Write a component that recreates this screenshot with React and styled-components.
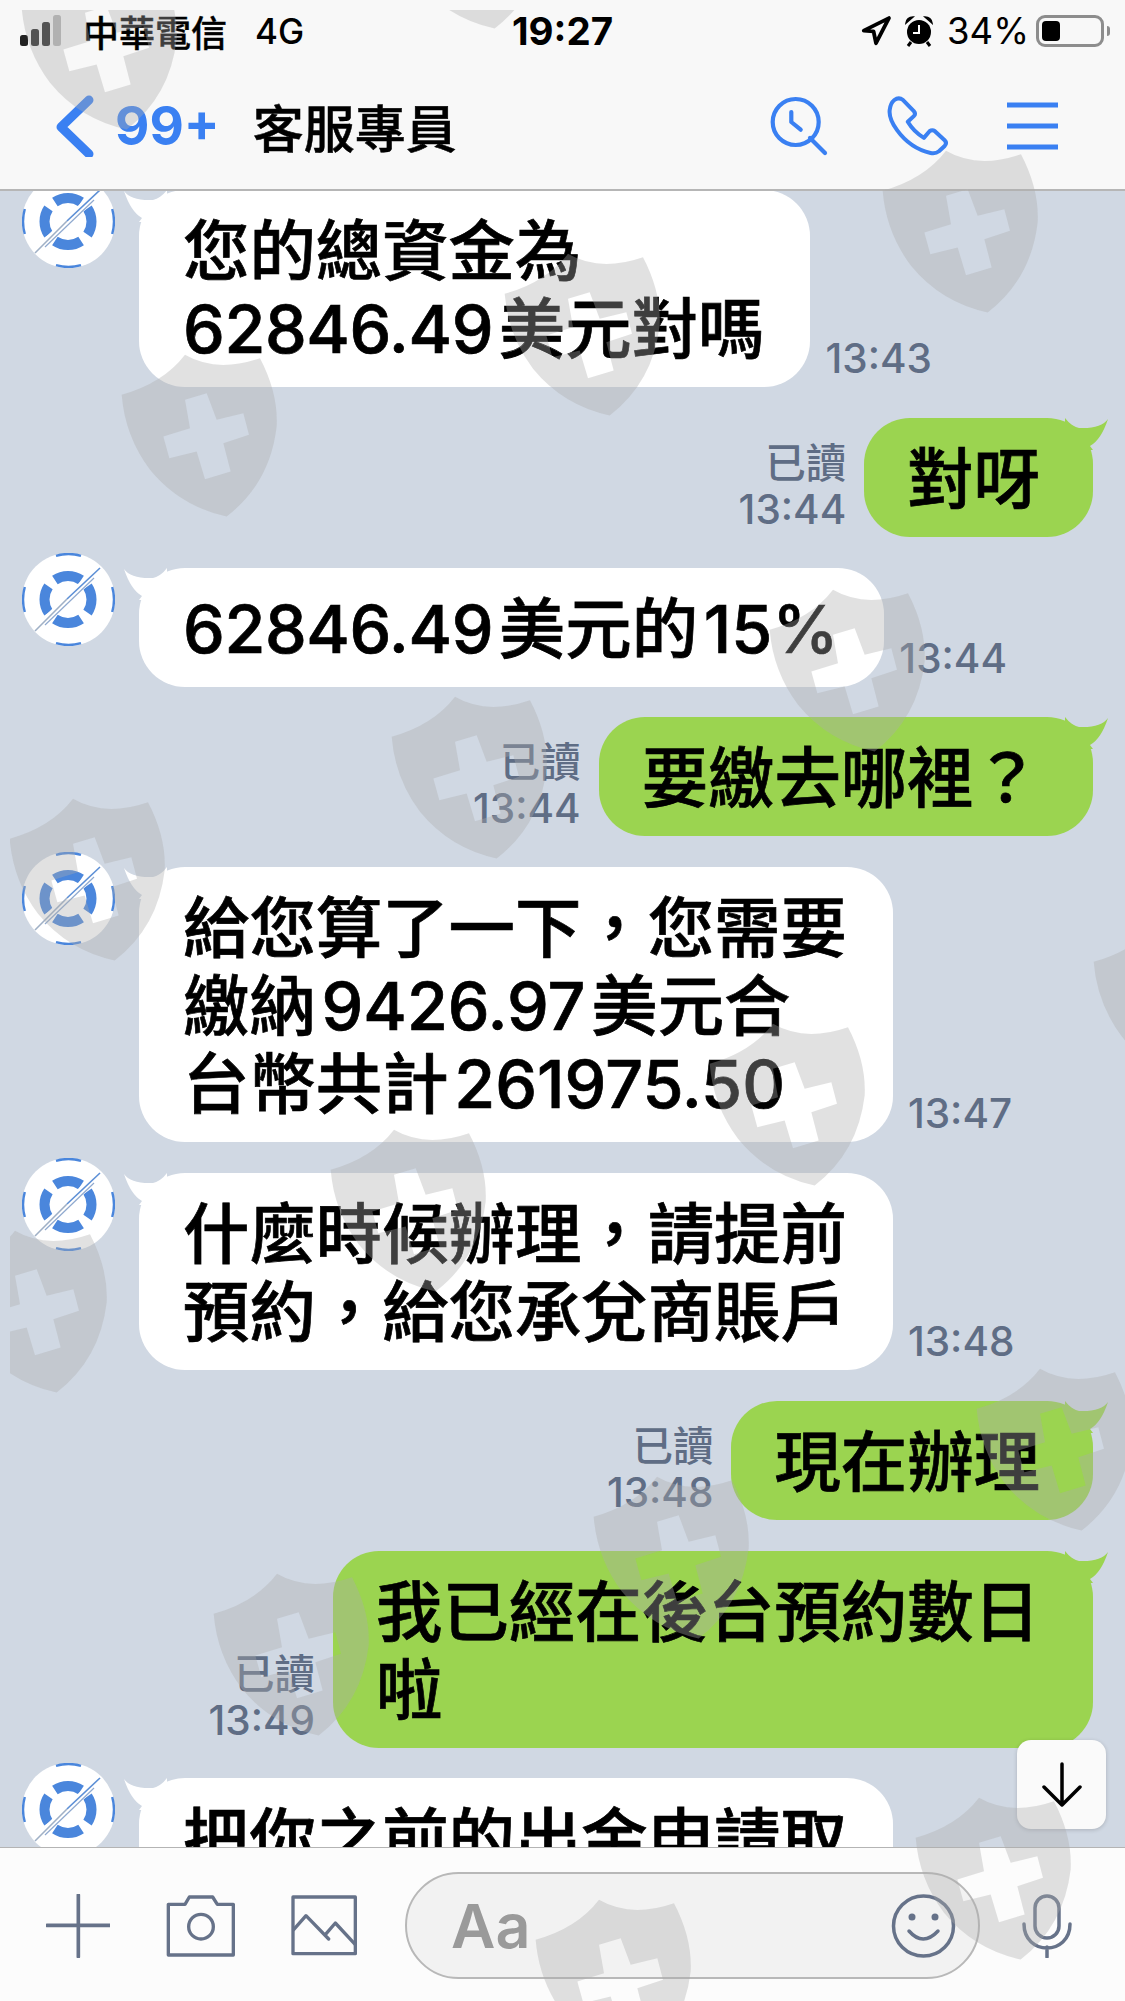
import React from 'react';
import styled, { createGlobalStyle } from 'styled-components';

const GlobalStyle = createGlobalStyle`
  html, body {
    margin: 0;
    padding: 0;
    background: #d0d8e3;
  }
  body {
    font-family: Inter, "Noto Sans CJK TC", sans-serif;
    color: #000;
  }
`;

const Page = styled.div`
  position: relative;
  width: 1125px;
  height: 2001px;
  display: flex;
  flex-direction: column;
  overflow: hidden;
  background: #d0d8e3;
`;

const Header = styled.header`
  height: 189px;
  flex: none;
  display: flex;
  flex-direction: column;
  background: #f8f8f8;
  border-bottom: 2px solid #b6b6b6;
`;

const StatusBar = styled.div`
  height: 62px;
  padding: 0 17px 0 20px;
  display: flex;
  align-items: center;
  justify-content: space-between;
`;

const StatusSide = styled.div`
  width: 400px;
  display: flex;
  align-items: center;
  gap: ${(p) => p.$gap || 0}px;
  justify-content: ${(p) => (p.$right ? 'flex-end' : 'flex-start')};
`;

const Carrier = styled.span`
  margin-left: 21px;
  font-size: 36px;
  font-weight: 500;
  -webkit-text-stroke: 0.4px #000;
`;

const Network = styled.span`
  margin-left: 28px;
  font-size: 35px;
  font-weight: 500;
`;

const Clock = styled.span`
  margin-left: -3px;
  font-size: 38.5px;
  font-weight: 700;
`;

const Percent = styled.span`
  font-size: 36.5px;
  font-weight: 400;
`;

const Battery = styled.div`
  position: relative;
  width: 68px;
  height: 32px;
  margin: 0 4px 0 -6px;
  padding: 3px;
  box-sizing: border-box;
  border: 3px solid #8d8d8d;
  border-radius: 9px;
  &::before {
    content: '';
    display: block;
    width: 18px;
    height: 100%;
    border-radius: 4px;
    background: #000;
  }
  &::after {
    content: '';
    position: absolute;
    right: -9px;
    top: 8px;
    width: 3px;
    height: 10px;
    background: #8d8d8d;
    border-radius: 0 3px 3px 0;
  }
`;

const NavBar = styled.nav`
  flex: 1;
  display: flex;
  align-items: center;
  padding: 0 67px 0 56px;
  color: #3a80f2;
`;

const Unread = styled.span`
  margin-left: 21px;
  font-size: 53px;
  font-weight: 700;
`;

const Title = styled.h1`
  margin: 0 0 0 33px;
  font-size: 51px;
  font-weight: 500;
  -webkit-text-stroke: 0.5px #000;
  color: #000;
  flex: 1;
`;

const NavIcons = styled.div`
  display: flex;
  align-items: center;
  gap: 58px;
`;

const Chat = styled.main`
  position: relative;
  flex: 1;
  min-height: 0;
  overflow: hidden;
`;

const MessageList = styled.div`
  margin-top: -1px;
  padding: 0 32px 0 22px;
  display: flex;
  flex-direction: column;
  gap: 30.8px;
`;

const Row = styled.div`
  display: flex;
  align-items: flex-end;
  justify-content: ${(p) => (p.$mine ? 'flex-end' : 'flex-start')};
  position: relative;
`;

const AvatarSlot = styled.div`
  align-self: flex-start;
  width: 93px;
  height: 93px;
  margin: -15px 24px 0 0;
  flex: none;
`;

const Bubble = styled.div`
  position: relative;
  box-sizing: border-box;
  padding: ${(p) => (p.$mine ? '22px 53px 19px 43px' : '22px 46px 19px 44px')};
  border-radius: 46px;
  font-size: 66.4px;
  line-height: 78px;
  font-weight: 500;
  -webkit-text-stroke: 0.7px #000;
  white-space: nowrap;
  background: ${(p) => (p.$mine ? '#9bd450' : '#fff')};
`;

const Amount = styled.span`
  letter-spacing: -0.4px;
`;

const Tail = styled.svg`
  position: absolute;
  top: 0;
  width: 44px;
  height: 32px;
  overflow: visible;
  ${(p) => (p.$mine ? 'right: -16px; transform: scaleX(-1);' : 'left: -16px;')}
`;

const Meta = styled.div`
  margin: ${(p) => (p.$mine ? '0 18px 4px 0' : '0 0 5px 15px')};
  text-align: right;
  font-size: 40.5px;
  font-weight: 500;
  line-height: 46px;
  color: #5f6d85;
`;

const DownButton = styled.div`
  position: absolute;
  right: 19px;
  bottom: 18px;
  width: 89px;
  height: 89px;
  display: flex;
  align-items: center;
  justify-content: center;
  border-radius: 14px;
  background: #fafafa;
  box-shadow: 0 1px 4px rgba(0, 0, 0, 0.18);
`;

const Footer = styled.footer`
  box-sizing: border-box;
  height: 154px;
  flex: none;
  display: flex;
  align-items: center;
  padding: 2px 53px 0 46px;
  background: #fcfcfc;
  border-top: 1px solid #b4b4b4;
`;

const ToolIcon = styled.svg`
  flex: none;
  margin-left: ${(p) => p.$gap || 0}px;
`;

const InputPill = styled.div`
  box-sizing: border-box;
  width: 575px;
  height: 107px;
  margin-left: 48px;
  padding: 0 22px 0 44px;
  display: flex;
  align-items: center;
  justify-content: space-between;
  border: 2px solid #b8b8b8;
  border-radius: 54px;
  background: #f2f2f2;
`;

const Placeholder = styled.span`
  font-size: 61px;
  font-weight: 600;
  color: #9a9a9a;
`;

const Watermarks = styled.div`
  position: absolute;
  inset: 10px 0 0 10px;
  overflow: hidden;
  pointer-events: none;
  z-index: 5;
`;

const ShieldIcon = styled.svg`
  position: absolute;
  left: ${(p) => p.$x - 10}px;
  top: ${(p) => p.$y - 10}px;
  width: 160px;
  height: 167px;
`;

const SLATE = '#667289';

const Shield = ({ x, y }) => (
  <ShieldIcon $x={x} $y={y} viewBox="60 100 480 500">
    <path
      fill="rgb(172,172,172)"
      fillOpacity="0.36"
      fillRule="evenodd"
      d="M65 225Q190 190 255 105Q350 160 480 115Q535 220 530 320Q510 490 380 590Q240 560 150 450Q75 350 65 225ZM255 240L320 220L350 300L430 280L447 345L370 370L392 455L315 478L290 395L208 415L190 350L270 325Z"
    />
  </ShieldIcon>
);

const SignalIcon = () => (
  <svg width="42" height="34" viewBox="0 0 42 34">
    <rect x="0" y="21" width="8" height="11" rx="2.5" fill="#222" />
    <rect x="11" y="15" width="8" height="17" rx="2.5" fill="#222" />
    <rect x="22" y="8" width="8" height="24" rx="2.5" fill="#222" />
    <rect x="33" y="1" width="8" height="31" rx="2.5" fill="#b5b5b5" />
  </svg>
);

const LocationIcon = () => (
  <svg width="30" height="30" viewBox="52 37 86 84">
    <path d="M60 78L132 42L95 114L88 80Z" fill="none" stroke="#000" strokeWidth="11" strokeLinejoin="round" />
  </svg>
);

const AlarmIcon = () => (
  <svg width="30" height="32" viewBox="0 0 30 32">
    <circle cx="15" cy="17" r="12" fill="#000" />
    <path d="M2 8Q3 2 9 2ZM28 8Q27 2 21 2Z" fill="#000" stroke="#000" strokeWidth="1.5" />
    <path d="M7 27L4 31M23 27L26 31" stroke="#000" strokeWidth="3" />
    <path d="M15 10V18H9" fill="none" stroke="#fff" strokeWidth="2" />
  </svg>
);

const BackIcon = () => (
  <svg width="38" height="62" viewBox="0 0 38 62">
    <path d="M33 5L5 32L33 59" fill="none" stroke="#3a80f2" strokeWidth="9" strokeLinecap="round" strokeLinejoin="round" />
  </svg>
);

const SearchClockIcon = () => (
  <svg width="60" height="62" viewBox="20 8 60 62">
    <g fill="none" stroke="#3a80f2" strokeWidth="4.2" strokeLinecap="round" strokeLinejoin="round">
      <circle cx="46.7" cy="35" r="23" />
      <path d="M61 51L76 66" />
      <path d="M42.3 25V35L51.7 42.7" />
    </g>
  </svg>
);

const PhoneIcon = () => (
  <svg width="62" height="62" viewBox="410 30 185 185">
    <path
      d="M432 45Q445 35 458 45L490 78Q497 86 490 93L472 110Q490 140 520 158L537 138Q545 132 553 138L582 165Q590 173 582 182L565 198Q555 206 540 203Q480 190 440 135Q415 100 418 75Q420 55 432 45Z"
      fill="none"
      stroke="#3a80f2"
      strokeWidth="12"
      strokeLinejoin="round"
    />
  </svg>
);

const MenuIcon = () => (
  <svg width="51" height="48" viewBox="0 0 51 48">
    <path d="M0 3H51M0 24H51M0 45H51" stroke="#3a80f2" strokeWidth="5" />
  </svg>
);

const Avatar = () => (
  <svg width="93" height="93" viewBox="0 0 93 93">
    <circle cx="46.5" cy="46.5" r="46.5" fill="#fff" />
    <path
      d="M34 2.8A45.5 45.5 0 0 1 59 2.8M34 90.2A45.5 45.5 0 0 0 59 90.2M90.2 34A45.5 45.5 0 0 1 90.2 59M2.8 34A45.5 45.5 0 0 0 2.8 59"
      fill="none"
      stroke="#4a86dc"
      strokeWidth="2.4"
    />
    <circle cx="46" cy="46.5" r="23.5" fill="none" stroke="#4a86dc" strokeWidth="10" pathLength="360" strokeDasharray="68 22" strokeDashoffset="34" />
    <path d="M77 16L14 77" stroke="#fff" strokeWidth="8" />
    <path d="M78 15L45 46" stroke="#5c8fd6" strokeWidth="1.6" />
    <path d="M45 46L13 78" stroke="#9fb0c6" strokeWidth="1.6" />
    <path d="M72 25L23 72" stroke="#8fa9cf" strokeWidth="1.2" />
  </svg>
);

const ArrowDownIcon = () => (
  <svg width="42" height="46" viewBox="0 0 42 46">
    <path d="M21 2V43M3 25L21 43L39 25" fill="none" stroke="#000" strokeWidth="3.5" strokeLinecap="round" strokeLinejoin="round" />
  </svg>
);

const PlusIcon = () => (
  <ToolIcon width="64" height="64" viewBox="47 43 192 192">
    <path d="M50 137H238M144 46V231" fill="none" stroke={SLATE} strokeWidth="11" strokeLinecap="round" />
  </ToolIcon>
);

const CameraIcon = () => (
  <ToolIcon $gap={56} width="69" height="64" viewBox="408 50 207 190">
    <g fill="none" stroke={SLATE} strokeWidth="10" strokeLinejoin="round">
      <path d="M415 80H465L478 58H548L562 80H610V232H415Z" />
      <circle cx="513" cy="147" r="37" />
    </g>
  </ToolIcon>
);

const ImageIcon = () => (
  <ToolIcon $gap={56} width="66" height="62" viewBox="782 56 198 186">
    <g fill="none" stroke={SLATE} strokeWidth="10" strokeLinejoin="round" strokeLinecap="round">
      <rect x="788" y="62" width="187" height="170" />
      <path d="M790 160L827 118L895 188M885 175L915 140L975 205" />
    </g>
  </ToolIcon>
);

const SmileIcon = () => (
  <svg width="65" height="66" viewBox="0 0 65 66">
    <g fill="none" stroke={SLATE} strokeWidth="3.5" strokeLinecap="round">
      <circle cx="32.5" cy="33" r="30" />
      <path d="M18 38Q32 54 47 38" />
    </g>
    <circle cx="21" cy="24" r="3.5" fill={SLATE} />
    <circle cx="44" cy="24" r="3.5" fill={SLATE} />
  </svg>
);

const MicIcon = () => (
  <ToolIcon $gap={42} width="50" height="64" viewBox="0 0 50 64">
    <g fill="none" stroke={SLATE} strokeWidth="3.5" strokeLinecap="round">
      <rect x="13" y="2" width="24" height="42" rx="12" />
      <path d="M2 30C2 62 48 62 48 30M25 53V63" />
    </g>
  </ToolIcon>
);

const messages = [
  { lines: ['您的總資金為', <><Amount>62846.49</Amount>{'\u200a美元對嗎'}</>], time: '13:43' },
  { mine: true, lines: ['對呀'], time: '13:44' },
  { lines: [<><Amount>62846.49</Amount>{'\u200a美元的\u200a15%'}</>], time: '13:44' },
  { mine: true, lines: ['要繳去哪裡？'], time: '13:44' },
  { lines: ['給您算了一下，您需要', '繳納\u200a9426.97\u200a美元合', '台幣共計\u200a261975.50'], time: '13:47' },
  { lines: ['什麼時候辦理，請提前', '預約，給您承兌商賬戶'], time: '13:48' },
  { mine: true, lines: ['現在辦理'], time: '13:48' },
  { mine: true, lines: ['我已經在後台預約數日', '啦'], time: '13:49' },
  { lines: ['把你之前的出金申請取'] },
];

const shields = [
  [20, -34], [388, -135], [881, 149], [503, 252], [120, 353],
  [768, 588], [390, 695], [8, 797], [708, 1022], [329, 1128],
  [1092, 920], [-50, 1229], [975, 1367], [592, 1475], [212, 1572],
  [914, 1796], [534, 1898],
];

const Message = ({ mine, lines, time }) => (
  <Row $mine={mine}>
    {!mine && (
      <AvatarSlot>
        <Avatar />
      </AvatarSlot>
    )}
    {mine && (
      <Meta $mine>
        已讀
        <br />
        {time}
      </Meta>
    )}
    <Bubble $mine={mine}>
      <Tail $mine={mine} viewBox="-16 0 44 32">
        <path
          d="M-15 1Q-8 11 14 10Q22 8 28 0L28 32L0 32L3 28Q-8 22 -15 1Z"
          fill={mine ? '#9bd450' : '#fff'}
          stroke="none"
        />
      </Tail>
      {lines.map((line, i) => (
        <div key={i}>{line}</div>
      ))}
    </Bubble>
    {!mine && time && <Meta>{time}</Meta>}
  </Row>
);

export default function App() {
  return (
    <Page lang="zh-Hant">
      <GlobalStyle />
      <Header>
        <StatusBar>
          <StatusSide>
            <SignalIcon />
            <Carrier>中華電信</Carrier>
            <Network>4G</Network>
          </StatusSide>
          <Clock>19:27</Clock>
          <StatusSide $right $gap={13}>
            <LocationIcon />
            <AlarmIcon />
            <Percent>34%</Percent>
            <Battery />
          </StatusSide>
        </StatusBar>
        <NavBar>
          <BackIcon />
          <Unread>99+</Unread>
          <Title>客服專員</Title>
          <NavIcons>
            <SearchClockIcon />
            <PhoneIcon />
            <MenuIcon />
          </NavIcons>
        </NavBar>
      </Header>
      <Chat>
        <MessageList>
          {messages.map((m, i) => (
            <Message key={i} {...m} />
          ))}
        </MessageList>
        <DownButton>
          <ArrowDownIcon />
        </DownButton>
      </Chat>
      <Footer>
        <PlusIcon />
        <CameraIcon />
        <ImageIcon />
        <InputPill>
          <Placeholder>Aa</Placeholder>
          <SmileIcon />
        </InputPill>
        <MicIcon />
      </Footer>
      <Watermarks>
        {shields.map(([x, y], i) => (
          <Shield key={i} x={x} y={y} />
        ))}
      </Watermarks>
    </Page>
  );
}
